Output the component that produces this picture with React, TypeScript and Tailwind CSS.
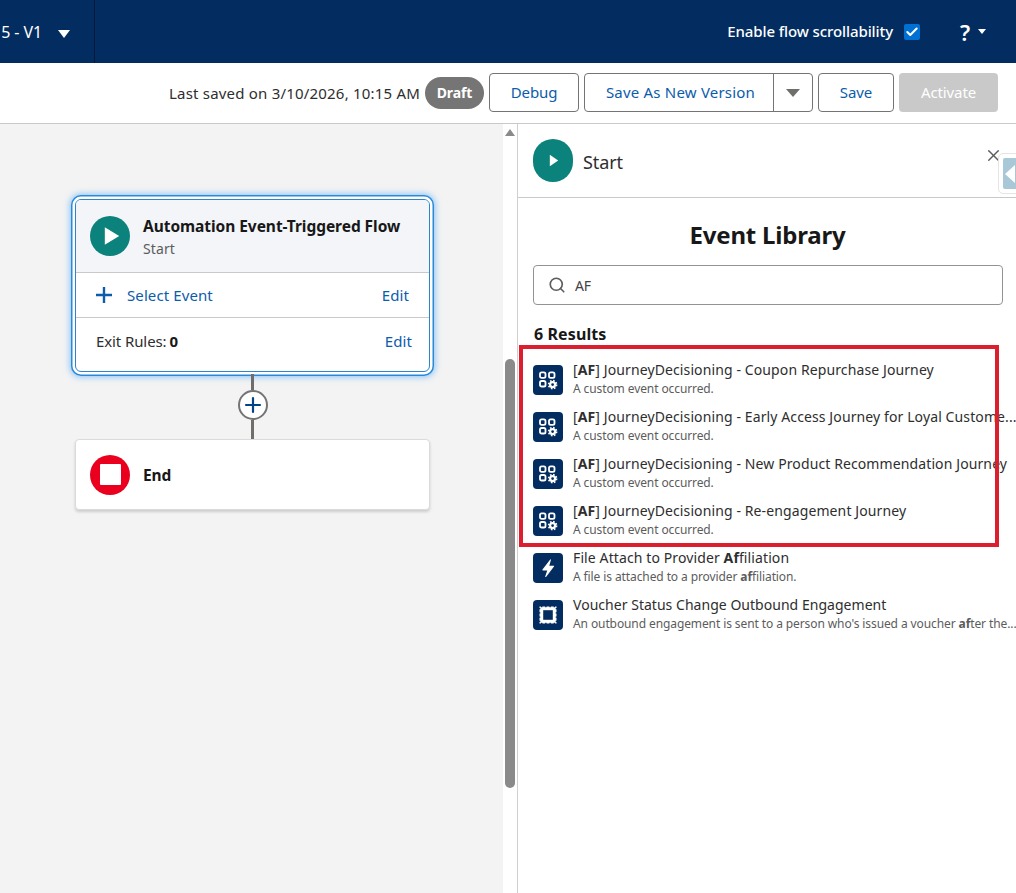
import type { ReactNode } from 'react';
import { Search, X, Plus, Check } from 'lucide-react';

function CustomEventIcon() {
  return (
    <svg viewBox="0 0 30 30" className="w-[30px] h-[30px]" fill="none" stroke="white" strokeWidth="1.8">
      <rect x="7" y="7.4" width="5.5" height="5.5" rx="1.6" />
      <rect x="16" y="7.4" width="5.5" height="5.5" rx="1.6" />
      <rect x="7" y="16" width="5.5" height="5.5" rx="1.6" />
      <circle cx="19.6" cy="19.6" r="2.5" strokeWidth="2.2" />
      <circle cx="19.6" cy="19.6" r="4" strokeWidth="1.6" strokeDasharray="1.6 1.54" />
    </svg>
  );
}

function BoltIcon() {
  return (
    <svg viewBox="0 0 30 30" className="w-[30px] h-[30px]">
      <path d="M17.2 6.5 9.5 16.6c-.3.4 0 .9.4.9h4.3l-2 6c-.1.5.5.8.8.4l8-10.3c.3-.4 0-.9-.4-.9h-4.3l1.6-5.7c.1-.6-.5-.9-.7-.5z" fill="white" />
    </svg>
  );
}

function StampIcon() {
  return (
    <svg viewBox="0 0 30 30" className="w-[30px] h-[30px]">
      <rect x="6.5" y="6.5" width="17" height="17" fill="white" />
      <rect x="6.5" y="6.5" width="17" height="17" fill="none" stroke="#032d60" strokeWidth="1.6" strokeDasharray="1.4 2.85" strokeDashoffset="-1.4" />
      <rect x="10.2" y="10.2" width="9.6" height="9.6" fill="#032d60" />
    </svg>
  );
}

function ResultRow({ icon, title, desc }: { icon: ReactNode; title: ReactNode; desc: ReactNode }) {
  return (
    <div className="flex gap-[10px] h-[47px] items-start">
      <div className="w-[30px] h-[30px] shrink-0 rounded-[4px] bg-[#032d60] mt-[1px]">{icon}</div>
      <div className="min-w-0 flex-1 -mt-[4px]">
        <div className="whitespace-nowrap text-[14px] leading-[20px] tracking-[0.11px] text-[#2e2e2e]">{title}</div>
        <div className="whitespace-nowrap text-[12px] leading-[17px] text-[#5c5c5c]">{desc}</div>
      </div>
    </div>
  );
}

const journeyRows = [
  'Coupon Repurchase Journey',
  'Early Access Journey for Loyal Custome...',
  'New Product Recommendation Journey',
  'Re-engagement Journey',
];

export default function App() {
  return (
    <div className="w-[1016px] h-[893px] overflow-hidden flex flex-col bg-white text-[#181818] font-['Noto_Sans',sans-serif] tracking-[-0.1px]">
      {/* top nav */}
      <header className="h-[63px] shrink-0 bg-[#032d60] flex items-center text-white">
        <div className="w-[95px] h-full border-r border-[#04193a] flex items-center justify-end pr-[24px] gap-[16px] overflow-hidden">
          <span className="text-[16px] whitespace-nowrap">5 - V1</span>
          <span className="w-0 h-0 border-x-[6.5px] border-x-transparent border-t-[8px] border-t-white mt-[4px]" />
        </div>
        <div className="ml-auto flex items-center pr-[30px]">
          <span className="text-[15px] font-medium">Enable flow scrollability</span>
          <span className="ml-[11px] w-4 h-4 rounded-[2px] bg-[#0070d2] flex items-center justify-center">
            <Check size={14} strokeWidth={3.5} className="text-white" />
          </span>
          <span className="ml-[40px] text-[22px] font-semibold leading-none">?</span>
          <span className="ml-[8px] w-0 h-0 border-x-[4px] border-x-transparent border-t-[5px] border-t-white" />
        </div>
      </header>

      {/* toolbar */}
      <div className="h-[61px] shrink-0 border-b border-[#c9c9c9] flex items-center justify-end pr-[18px] pb-[1px]">
        <span className="mt-[1px] text-[15px] tracking-[0.2px] text-[#2e2e2e] whitespace-nowrap">Last saved on 3/10/2026, 10:15 AM</span>
        <span className="ml-[5px] w-[59px] h-8 rounded-full bg-[#757575] text-white text-[14px] font-bold flex items-center justify-center">Draft</span>
        <button className="ml-[5px] w-[90px] h-[39px] rounded-[4px] border border-[#747474] text-[15px] text-[#0b5cab]">Debug</button>
        <div className="ml-[5px] w-[229px] h-[39px] rounded-[4px] border border-[#747474] flex">
          <button className="flex-1 pl-[3px] text-[15px] tracking-[0.2px] text-[#0b5cab] border-r border-[#747474]">Save As New Version</button>
          <span className="w-[38px] flex items-center justify-center">
            <span className="w-0 h-0 border-x-[7px] border-x-transparent border-t-[8px] border-t-[#706e6b] mt-[1px]" />
          </span>
        </div>
        <button className="ml-[5px] w-[76px] h-[39px] rounded-[4px] border border-[#747474] text-[15px] text-[#0b5cab]">Save</button>
        <button className="ml-[5px] w-[99px] h-[39px] rounded-[4px] bg-[#c9c9c9] text-[15px] text-white">Activate</button>
      </div>

      <div className="flex-1 min-h-0 flex">
        {/* canvas */}
        <main className="w-[503px] shrink-0 bg-[#f3f3f3] pl-[75px] pt-[75px]">
          <div className="w-[355px] rounded-[6px] bg-white border border-[#2e84c8] shadow-[0_0_0_2.5px_white,0_0_0_4px_#2a8ad8,0_0_6px_5px_rgba(27,150,255,0.5)] overflow-hidden">
            <div className="h-[73px] bg-[#f3f5f9] border-b border-[#c9c9c9] flex items-center pl-[14px]">
              <div className="w-10 h-10 rounded-full bg-[#0b827c] flex items-center justify-center">
                <svg viewBox="0 0 20 24" className="w-[16px] h-[20px] ml-[3px]"><path d="M1 1v22l18-11z" fill="white" /></svg>
              </div>
              <div className="ml-[13px] pt-[3px]">
                <div className="text-[15.5px] leading-[20px] font-bold tracking-[-0.05px]">Automation Event-Triggered Flow</div>
                <div className="mt-[3px] text-[14px] leading-[20px] tracking-[0.1px] text-[#5c5c5c]">Start</div>
              </div>
            </div>
            <div className="h-[45px] border-b border-[#c9c9c9] flex items-center pl-[20px] pr-[20px] text-[15px] tracking-[0.1px] text-[#0b5cab]">
              <svg viewBox="0 0 16 16" className="w-4 h-4 shrink-0" stroke="#0b5cab" strokeWidth="2.4"><path d="M8 0v16M0 8h16" /></svg>
              <span className="ml-[15px]">Select Event</span>
              <span className="ml-auto">Edit</span>
            </div>
            <div className="h-[53px] flex items-center pl-[20px] pr-[17px] pb-[6px] text-[15px]">
              <span className="text-[#2e2e2e]">Exit Rules:</span>
              <span className="ml-[3px] font-bold">0</span>
              <span className="ml-auto tracking-[0.1px] text-[#0b5cab]">Edit</span>
            </div>
          </div>
          <div className="w-[355px] flex flex-col items-center">
            <div className="w-[3px] h-[16px] bg-[#706e6b] mt-[2px]" />
            <div className="w-[30px] h-[30px] rounded-full bg-white border-2 border-[#747474] flex items-center justify-center">
              <Plus size={24} strokeWidth={2.2} className="text-[#014486]" />
            </div>
            <div className="w-[3px] h-[19px] bg-[#706e6b]" />
          </div>
          <div className="w-[355px] h-[71px] rounded-[4px] bg-white border border-[#dddbda] shadow-[0_2px_3px_rgba(0,0,0,0.16)] flex items-center pl-[14px]">
            <div className="w-10 h-10 rounded-full bg-[#ea001e] flex items-center justify-center">
              <div className="w-[21px] h-[21px] bg-white rounded-[1px]" />
            </div>
            <span className="ml-[13px] mt-[2px] text-[15.5px] font-bold">End</span>
          </div>
        </main>

        {/* scrollbar */}
        <div className="w-[15px] shrink-0 bg-white border-r border-[#d0d0d0] flex flex-col items-center">
          <span className="mt-[5px] w-0 h-0 border-x-[5px] border-x-transparent border-b-[7px] border-b-[#8a8a8a]" />
          <div className="mt-[223px] ml-[-1px] w-[10px] h-[429px] rounded-[5px] bg-[#8a8a8a]" />
        </div>

        {/* right panel */}
        <aside className="relative flex-1 min-w-0 overflow-hidden">
          <div className="h-[74px] border-b border-[#c9c9c9] flex items-center pl-[15px]">
            <div className="w-10 h-[43px] rounded-full bg-[#0b827c] flex items-center justify-center">
              <svg viewBox="0 0 12 16" className="w-[10px] h-[15px] ml-[1px]"><path d="M1 1v14l10-7z" fill="white" /></svg>
            </div>
            <span className="ml-[10px] mt-[3px] text-[18px] text-[#2e2e2e]">Start</span>
          </div>
          <X size={19} strokeWidth={1.8} className="absolute left-[466px] top-[22px] text-[#5c5c5c]" />
          <div className="absolute left-[480px] top-[29px] w-[30px] h-[41px] bg-white rounded-[5px] border border-[#e5e5e5] p-[4px]">
            <div className="w-full h-full rounded-[2px] bg-[#a8c8d8] overflow-hidden flex items-center">
              <span className="ml-[2px] w-0 h-0 border-y-[9px] border-y-transparent border-r-[10px] border-r-white" />
            </div>
          </div>

          <h2 className="mt-[19px] text-center text-[24px] leading-[36px] font-bold pl-[1px] tracking-[-0.2px]">Event Library</h2>
          <div className="mt-[12px] ml-[15px] w-[470px] h-10 rounded-[4px] border border-[#939393] flex items-center pl-[14px]">
            <Search size={18} strokeWidth={2.2} className="text-[#5c5c5c]" />
            <span className="ml-[9px] text-[14px] text-[#444]">AF</span>
          </div>
          <div className="mt-[17px] ml-[16px] text-[16px] tracking-[0.1px] leading-[24px] font-bold">6 Results</div>

          <div className="mt-[18px] pl-[15px]">
            {journeyRows.map((name) => (
              <ResultRow
                key={name}
                icon={<CustomEventIcon />}
                title={<>[<b>AF</b>] JourneyDecisioning - {name}</>}
                desc="A custom event occurred."
              />
            ))}
            <ResultRow
              icon={<BoltIcon />}
              title={<>File Attach to Provider <b>Af</b>filiation</>}
              desc={<>A file is attached to a provider <b>af</b>filiation.</>}
            />
            <ResultRow
              icon={<StampIcon />}
              title={<span className="tracking-[0.03px]">Voucher Status Change Outbound Engagement</span>}
              desc={<>An outbound engagement is sent to a person who's issued a voucher <b>af</b>ter the...</>}
            />
          </div>

          {/* red annotation box */}
          <div className="absolute left-[1px] top-[221px] w-[480px] h-[202px] border-[4px] border-[#dc1f2e] pointer-events-none" />
        </aside>
      </div>
    </div>
  );
}
